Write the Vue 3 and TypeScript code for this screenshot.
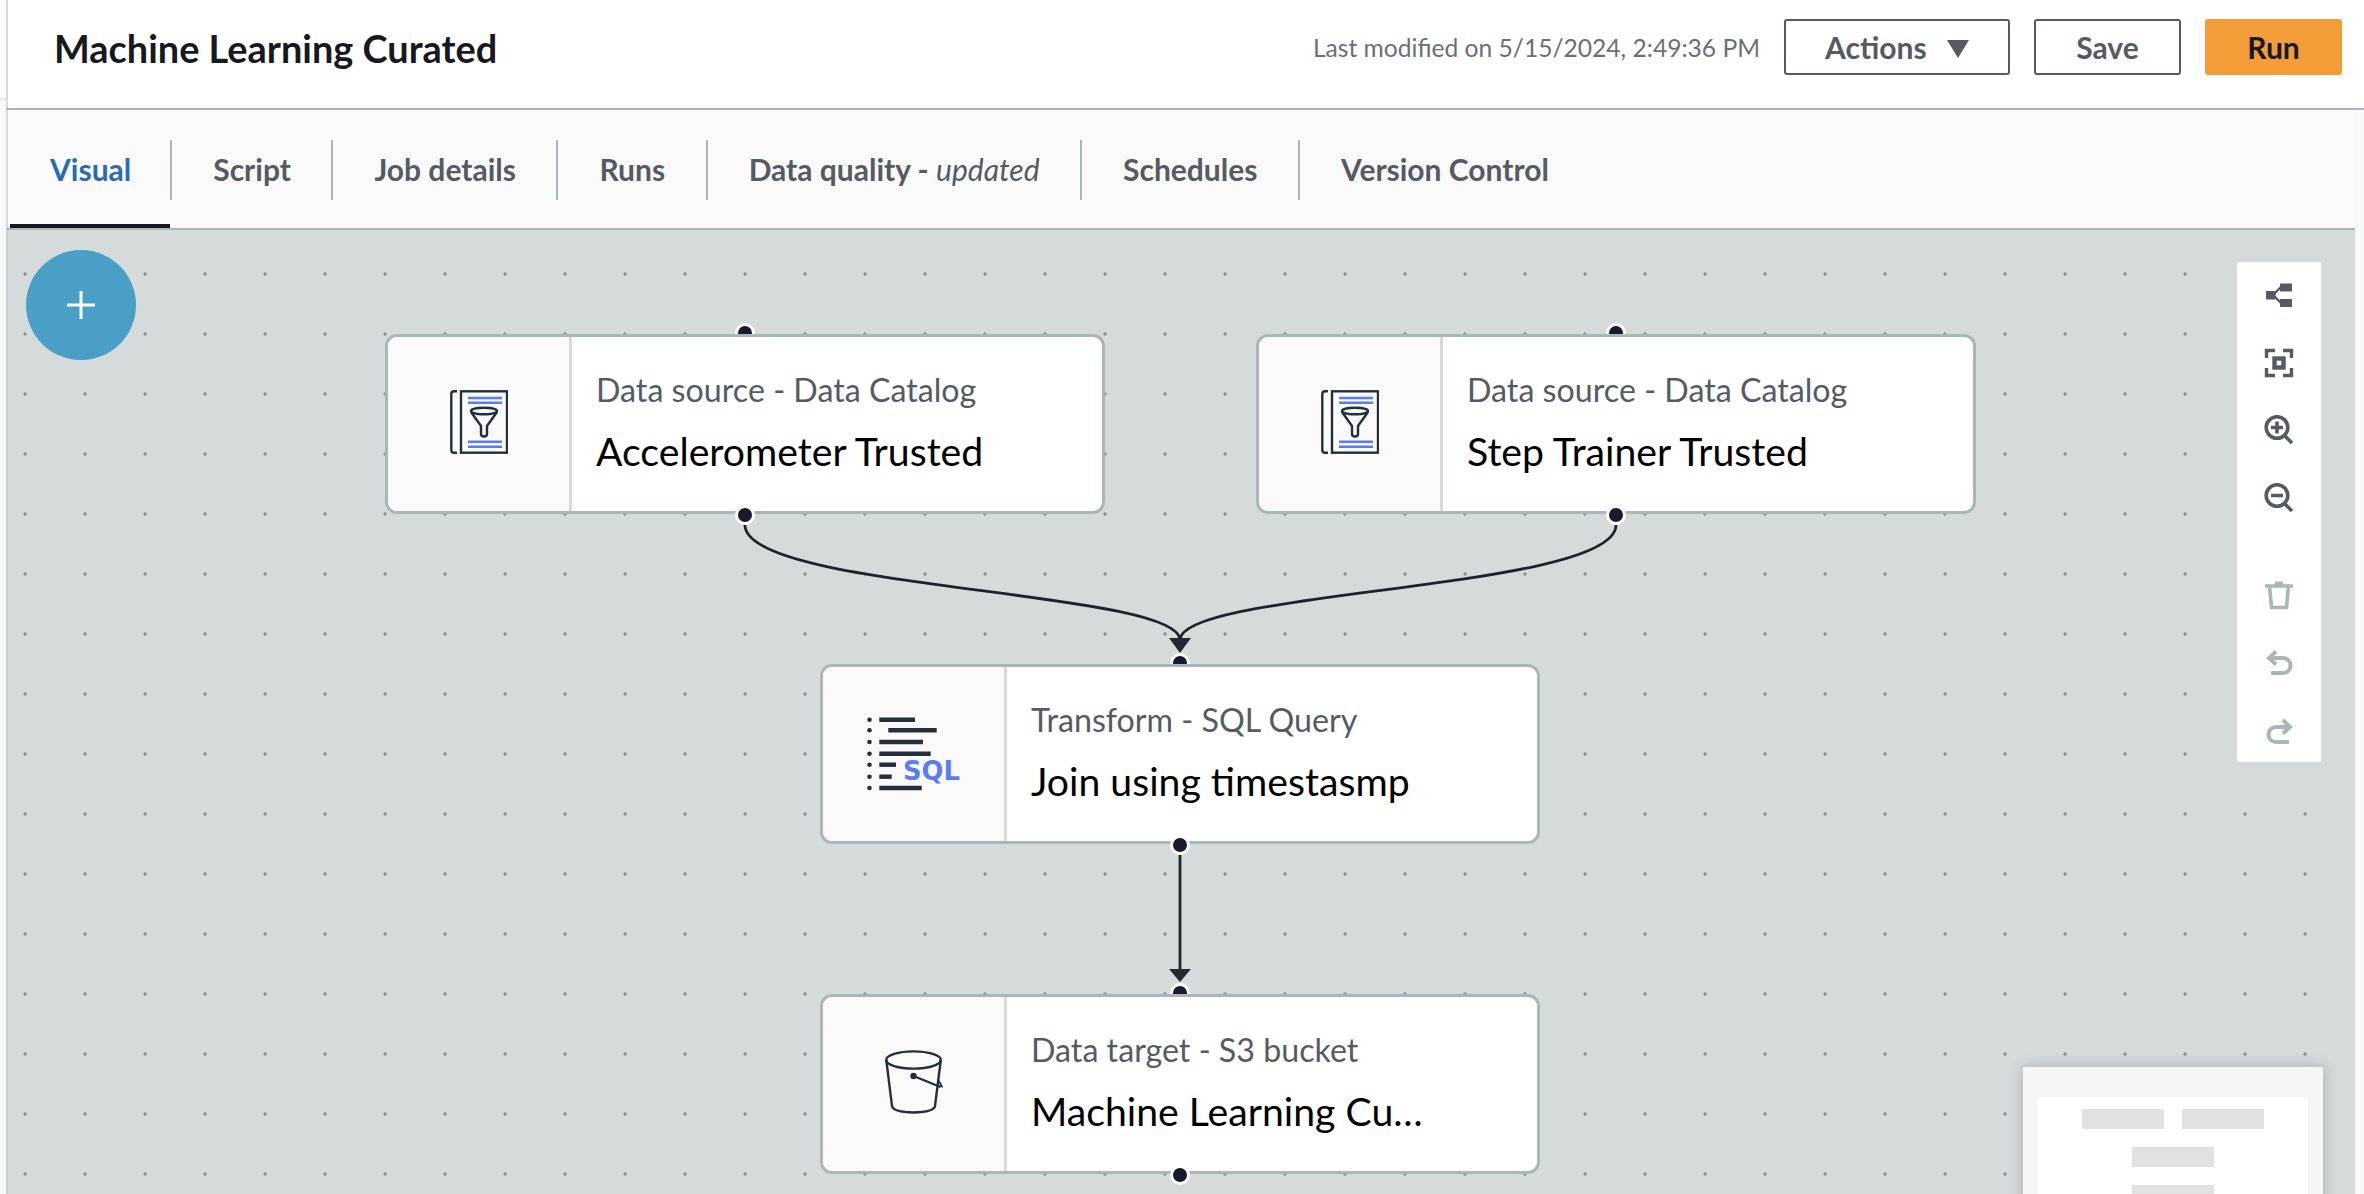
<script setup lang="ts">
interface FlowNode {
  id: string
  x: number
  y: number
  label: string
  title: string
  icon: 'catalog' | 'sql' | 'bucket'
}

const tabs = ['Visual', 'Script', 'Job details', 'Runs', 'Data quality', 'Schedules', 'Version Control']

const nodes: FlowNode[] = [
  { id: 'a', x: 379, y: 104, label: 'Data source - Data Catalog', title: 'Accelerometer Trusted', icon: 'catalog' },
  { id: 'b', x: 1250, y: 104, label: 'Data source - Data Catalog', title: 'Step Trainer Trusted', icon: 'catalog' },
  { id: 'c', x: 814, y: 434, label: 'Transform - SQL Query', title: 'Join using timestasmp', icon: 'sql' },
  { id: 'd', x: 814, y: 764, label: 'Data target - S3 bucket', title: 'Machine Learning Curated', icon: 'bucket' },
]

const sqlRows = [
  { y: 2.7, x1: 12.3, x2: 48 },
  { y: 13.3, x1: 21.3, x2: 69.7 },
  { y: 25, x1: 12.3, x2: 56 },
  { y: 36.7, x1: 12.3, x2: 63.7 },
  { y: 47.7, x1: 12.3, x2: 29 },
  { y: 59.7, x1: 12.3, x2: 24.7 },
  { y: 71, x1: 12.3, x2: 54.7 },
]

function place(x: number, y: number) {
  return { left: `${x}px`, top: `${y}px` }
}
</script>

<template>
  <div class="page">
    <div class="main">
      <header class="head">
        <h1 class="job-name">Machine Learning Curated</h1>
        <div class="head-right">
          <span class="modified">Last modified on 5/15/2024, 2:49:36 PM</span>
          <button class="btn btn-actions">Actions <i class="caret"></i></button>
          <button class="btn btn-save">Save</button>
          <button class="btn btn-run">Run</button>
        </div>
      </header>

      <nav class="tabs">
        <div v-for="(t, i) in tabs" :key="t" class="tab" :class="{ active: i === 0 }">
          <span>{{ t }}<template v-if="t === 'Data quality'"> - <em>updated</em></template></span>
        </div>
      </nav>

      <section class="canvas">
        <!-- top ports sit behind the cards -->
        <template v-for="n in nodes" :key="n.id + 'top'">
          <i class="port" :style="place(n.x + 360, n.y - 1)"></i>
        </template>

        <svg class="edges" width="2349" height="964">
          <path d="M739 295C739 360 1174 360 1174 410" />
          <path d="M1610 295C1610 360 1174 360 1174 410" />
          <path d="M1174 625V740" />
          <polygon points="1163,408 1185,408 1174,423" />
          <polygon points="1163,739 1185,739 1174,752" />
        </svg>

        <article v-for="n in nodes" :key="n.id" class="node" :style="place(n.x, n.y)">
          <div class="node-icon">
            <svg v-if="n.icon === 'catalog'" class="icon-up" width="58" height="64" viewBox="0 0 58 64" fill="none">
              <path d="M7 1.3H4Q1.3 1.3 1.3 4V60Q1.3 62.7 4 62.7H7" stroke="#232f3e" stroke-width="2.4" />
              <rect x="11" y="1.3" width="46" height="61.4" stroke="#232f3e" stroke-width="2.4" />
              <path d="M18 8H52M18 12.7H52M18 51.7H52M18 56.7H52" stroke="#5a7cf5" stroke-width="2.4" />
              <ellipse cx="34" cy="21" rx="13" ry="3.3" stroke="#232f3e" stroke-width="2.4" />
              <path d="M21 22L31 36V44Q31 46.5 34 46.5Q37 46.5 37 44V36L47 22" stroke="#232f3e" stroke-width="2.4" />
            </svg>
            <svg v-else-if="n.icon === 'sql'" class="icon-sql" width="101" height="74" viewBox="0 0 101 74">
              <g v-for="r in sqlRows" :key="r.y">
                <circle cx="2.5" :cy="r.y" r="2.3" fill="#232f3e" />
                <line :x1="r.x1" :x2="r.x2" :y1="r.y" :y2="r.y" stroke="#232f3e" stroke-width="4.4" />
              </g>
              <text x="36" y="62.5" class="sql-word" textLength="57" lengthAdjust="spacingAndGlyphs">SQL</text>
            </svg>
            <svg v-else class="icon-up" width="58" height="64" viewBox="0 0 58 64" fill="none" stroke="#232f3e" stroke-width="2.4">
              <ellipse cx="28.5" cy="10" rx="27.3" ry="8.6" />
              <path d="M1.3 10L7 56Q8 62 28.5 62.5Q49 62 50 56L55.8 10" />
              <path d="M28.5 26L55.5 37" />
              <path d="M53.5 30.5L57 36.5L52.5 36" stroke-width="1.6" />
              <circle cx="28.5" cy="26" r="2" fill="#232f3e" />
            </svg>
          </div>
          <div class="node-text">
            <div class="node-label">{{ n.label }}</div>
            <div class="node-title">{{ n.title }}</div>
          </div>
        </article>

        <template v-for="n in nodes" :key="n.id + 'bottom'">
          <i class="port" :style="place(n.x + 360, n.y + 181)"></i>
        </template>

        <button class="add-btn">
          <svg width="30" height="30" viewBox="0 0 30 30"><path d="M15 1V29M1 15H29" stroke="#fff" stroke-width="3" /></svg>
        </button>

        <aside class="toolbar">
          <svg width="30" height="30" viewBox="0 0 30 30" fill="#545b64">
            <rect x="2" y="11" width="9.5" height="8.5" />
            <rect x="16" y="3.5" width="12" height="8" />
            <rect x="16" y="19" width="12" height="8" />
            <path d="M9 15L17 7M9 15L17 23" stroke="#545b64" stroke-width="2.4" fill="none" />
          </svg>
          <svg width="30" height="30" viewBox="0 0 30 30" fill="none" stroke="#545b64" stroke-width="3.4">
            <path d="M2.5 10V2.5H11M19 2.5H27.5V10M2.5 20V27.5H11M19 27.5H27.5V20" />
            <rect x="10.5" y="10.5" width="9" height="9" stroke-width="4.4" />
          </svg>
          <svg width="30" height="30" viewBox="0 0 30 30" fill="none" stroke="#545b64" stroke-width="3.6">
            <circle cx="13" cy="12.5" r="10.8" />
            <path d="M20.5 20.5L28 28M7 12.5H19M13 6.5V18.5" />
          </svg>
          <svg width="30" height="30" viewBox="0 0 30 30" fill="none" stroke="#545b64" stroke-width="3.6">
            <circle cx="13" cy="12.5" r="10.8" />
            <path d="M20.5 20.5L28 28M7 12.5H19" />
          </svg>
          <i class="tool-gap"></i>
          <svg width="30" height="30" viewBox="0 0 30 30" fill="none" stroke="#aab7b8" stroke-width="3.6">
            <path d="M1 5H29M11 2.4H19" />
            <path d="M5.5 5L7.5 26.5H22.5L24.5 5" />
          </svg>
          <svg width="30" height="30" viewBox="0 0 30 30" fill="none" stroke="#aab7b8" stroke-width="4">
            <path d="M5 10H19A7.5 7.5 0 0 1 19 25H7" />
            <path d="M12 3.5L5 10L12 16.5" />
          </svg>
          <svg width="30" height="30" viewBox="0 0 30 30" fill="none" stroke="#aab7b8" stroke-width="4">
            <path d="M26 11H12A7.5 7.5 0 0 0 12 26H25" />
            <path d="M19 4L26 11L19 17.5" />
          </svg>
        </aside>

        <aside class="minimap">
          <div class="minimap-inner">
            <div class="mini-row"><b></b><b></b></div>
            <div class="mini-row"><b></b></div>
            <div class="mini-row"><b></b></div>
          </div>
        </aside>
      </section>
    </div>
  </div>
</template>

<style>
html,
body {
  margin: 0;
  overflow: hidden;
  background: #fff;
}
</style>

<style scoped>
.page {
  width: 2364px;
  height: 1194px;
  overflow: hidden;
  font-family: Lato, 'Noto Sans', sans-serif;
  background: linear-gradient(#fff 98px, #e6e8e8 98px, #e6e8e8 100px, #f7f8f8 100px);
  padding: 0 9px 0 6px;
  box-sizing: border-box;
}

.main {
  height: 100%;
  display: flex;
  flex-direction: column;
}

.head {
  height: 108px;
  flex: none;
  background: #fff;
  border-bottom: 2px solid #aab7b8;
  box-shadow: inset 2px 0 0 #d5dbdb;
  display: flex;
  align-items: center;
  justify-content: space-between;
  padding: 0 22px 0 48px;
  margin-right: -9px;
}

.job-name {
  margin: 0 0 12px;
  font-size: 37.9px;
  font-weight: 700;
  color: #16191f;
}

.head-right {
  display: flex;
  align-items: center;
  gap: 24px;
  margin-bottom: 14px;
}

.modified {
  font-size: 24.6px;
  color: #687078;
}

.btn {
  height: 56px;
  box-sizing: border-box;
  border: 2px solid #545b64;
  border-radius: 3px;
  background: #fff;
  color: #545b64;
  font: 700 30px Lato, 'Noto Sans', sans-serif;
  padding: 0;
}

.btn-actions {
  width: 226px;
}

.btn-save {
  width: 147px;
}

.btn-run {
  width: 137px;
  background: #f29d38;
  border-color: #f29d38;
  color: #16191f;
}

.caret {
  display: inline-block;
  margin: 0 0 1px 13px;
  border-left: 11.5px solid transparent;
  border-right: 11.5px solid transparent;
  border-top: 18px solid #545b64;
}

.tabs {
  height: 120px;
  flex: none;
  box-sizing: border-box;
  background: #fafafa;
  border-bottom: 2px solid #aab7b8;
  box-shadow: inset 2px 0 0 #d5dbdb;
  display: flex;
  padding: 30px 0 28px 4px;
}

.tab {
  display: flex;
  align-items: center;
  padding: 0 40.5px 0 41px;
  font-size: 30px;
  font-weight: 700;
  color: #545b64;
  border-right: 2px solid #aab7b8;
  position: relative;
}

.tab > span {
  margin-bottom: 2px;
}

.tab:last-child {
  border-right: 0;
}

.tab em {
  font-weight: 400;
}

.tab.active {
  color: #2a6ab3;
  padding: 0 39px 0 40px;
}

.tab.active::after {
  content: '';
  position: absolute;
  left: 0;
  right: 0;
  bottom: -28px;
  height: 4px;
  background: #16191f;
}

.canvas {
  position: relative;
  flex: 1;
  background-color: #d5dbdb;
  background-image: radial-gradient(circle, #8d9696 1.4px, transparent 2px);
  background-size: 60px 60px;
  background-position: 49px 14px;
  box-shadow: inset 2px 0 0 #c9d0d0;
}

.edges {
  position: absolute;
  left: 0;
  top: 0;
}

.edges path {
  fill: none;
  stroke: #1e2329;
  stroke-width: 2.8;
}

.edges polygon {
  fill: #232a31;
}

.node {
  position: absolute;
  width: 720px;
  height: 180px;
  box-sizing: border-box;
  border: 3px solid #aab7b8;
  border-radius: 12px;
  background: #fff;
  display: flex;
  overflow: hidden;
}

.node-icon {
  width: 181px;
  flex: none;
  background: #fafafa;
  border-right: 3px solid #d5dbdb;
  display: flex;
  align-items: center;
  justify-content: center;
}

.icon-up {
  margin-bottom: 5px;
}

.icon-sql {
  margin-right: -8px;
}

.node-text {
  flex: 1;
  min-width: 0;
  padding: 33px 108px 0 24px;
}

.node-label {
  font-size: 32.2px;
  line-height: 40px;
  color: #545b64;
  white-space: nowrap;
}

.node-title {
  margin-top: 18px;
  font-size: 39.2px;
  line-height: 46px;
  color: #000;
  white-space: nowrap;
  overflow: hidden;
  text-overflow: ellipsis;
}

.sql-word {
  font: 700 27px 'DejaVu Sans', sans-serif;
  fill: #5a7cf5;
}

.port {
  position: absolute;
  width: 20px;
  height: 20px;
  margin: -10px 0 0 -10px;
  box-sizing: border-box;
  border: 3px solid #fff;
  border-radius: 50%;
  background: #1a1a2e;
}

.add-btn {
  position: absolute;
  left: 20px;
  top: 20px;
  width: 110px;
  height: 110px;
  border: 0;
  border-radius: 50%;
  background: #4a9fc7;
  padding: 0;
  display: flex;
  align-items: center;
  justify-content: center;
}

.toolbar {
  position: absolute;
  left: 2231px;
  top: 32px;
  width: 84px;
  height: 500px;
  box-sizing: border-box;
  padding-top: 18px;
  background: #fff;
  display: flex;
  flex-direction: column;
  align-items: center;
  gap: 37.5px;
}

.tool-gap {
  height: 0;
  margin-bottom: -7px;
}

.minimap {
  position: absolute;
  left: 2017px;
  top: 837px;
  width: 300px;
  height: 200px;
  background: #f5f5f5;
  box-shadow: 0 0 14px rgba(0, 0, 0, 0.22);
  padding: 30px 15px 0;
  box-sizing: border-box;
}

.minimap-inner {
  background: #fff;
  height: 170px;
  padding-top: 12px;
  display: flex;
  flex-direction: column;
  align-items: center;
  gap: 18px;
}

.mini-row {
  display: flex;
  gap: 18px;
}

.mini-row b {
  width: 82px;
  height: 20px;
  background: #e1e1e1;
}
</style>
